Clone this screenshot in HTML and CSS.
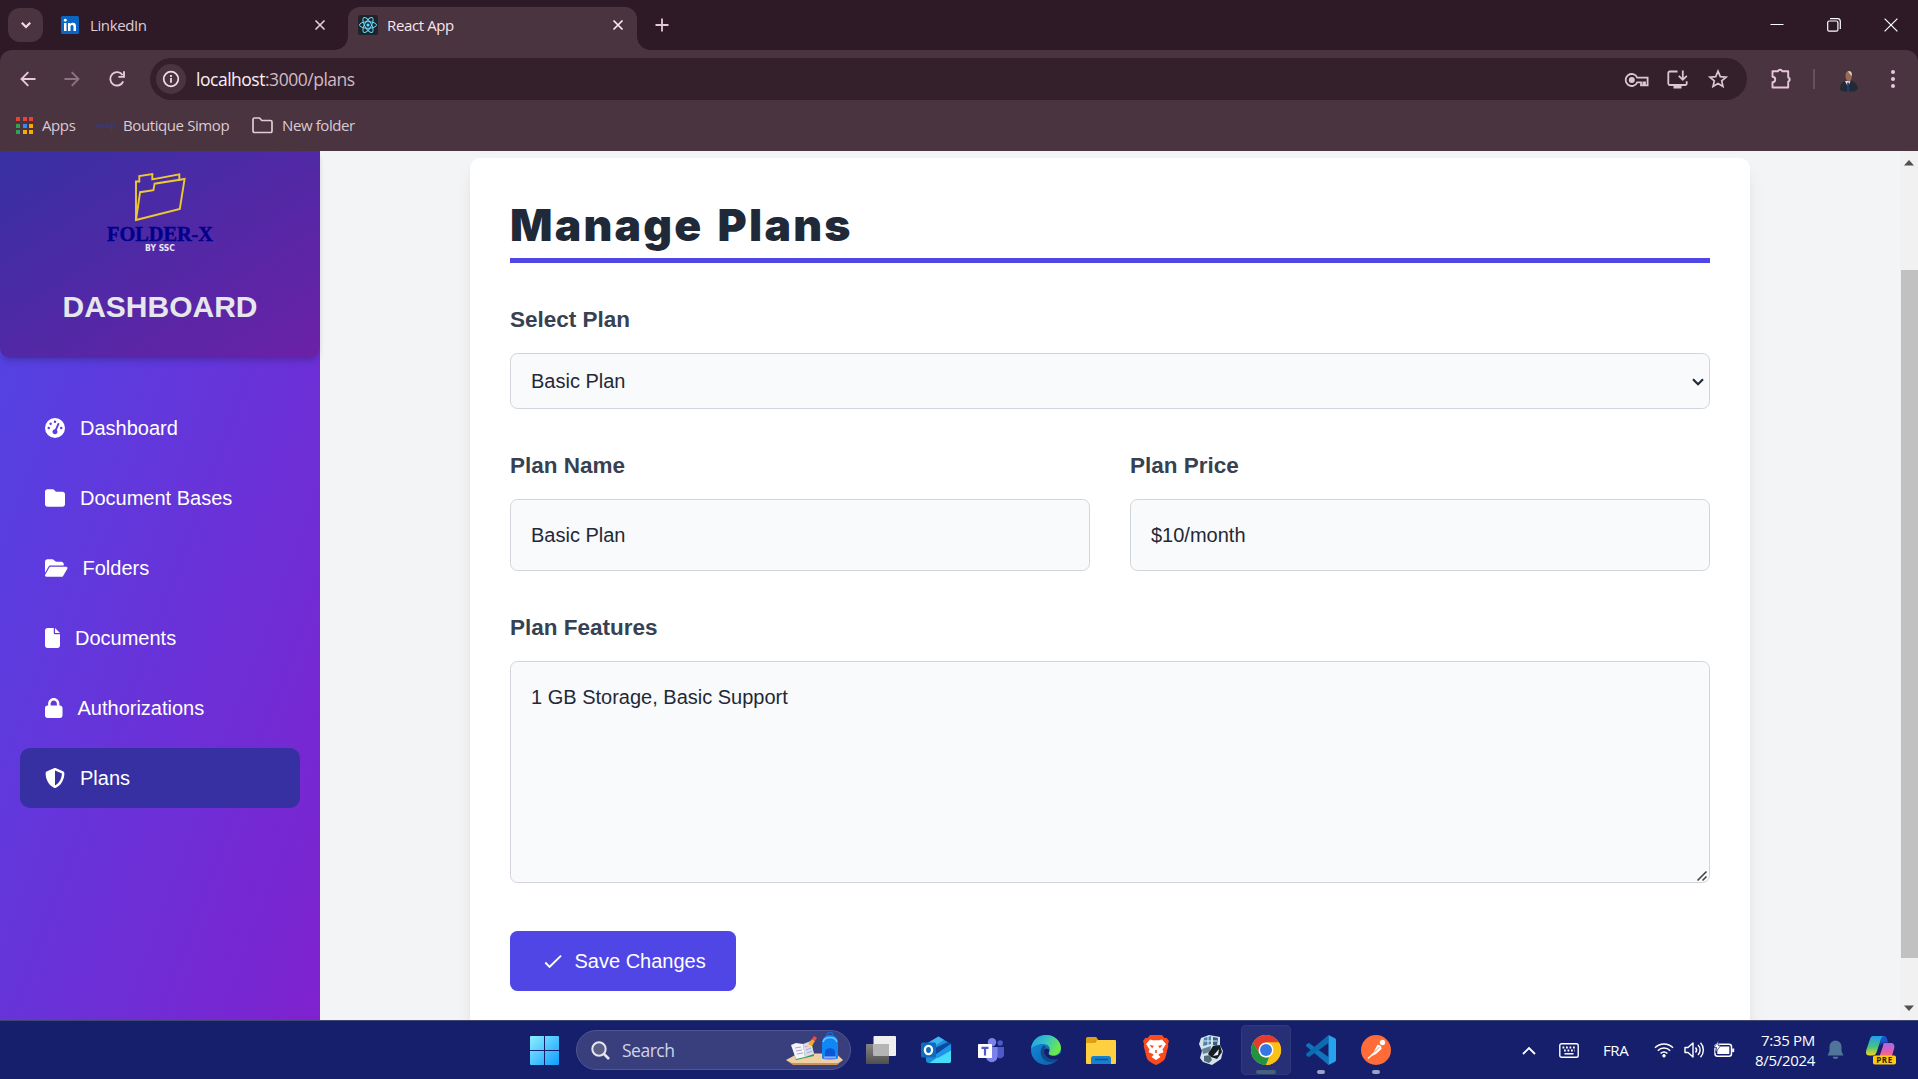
FILE: index.html
```html
<!DOCTYPE html>
<html lang="en">
<head>
<meta charset="utf-8">
<title>React App</title>
<link rel="stylesheet" href="styles.css">
</head>
<body>
<div class="screen">
  <div class="tabstrip">
    <div class="tab-search"><svg width="14" height="14" viewBox="0 0 14 14"><path d="M2.8 4.8 7 9l4.2-4.2" fill="none" stroke="#f3dce8" stroke-width="2.2"/></svg></div>
    <div class="tab tab-idle">
      <svg class="tab-icon" width="18" height="18" viewBox="0 0 18 18"><rect width="18" height="18" rx="1.5" fill="#0a66c2"/><path d="M3 7h2.5v8H3zM7 7h2.4v1.1C10 7.200 10.800 6.800 12 6.800c2.400 0 3 1.600 3 3.800V15h-2.500v-3.900c0-1-.2-2-1.400-2s-1.600.9-1.600 2V15H7z" fill="#fff"/><circle cx="4.250" cy="4.300" r="1.450" fill="#fff"/></svg>
      <span class="tab-title">LinkedIn</span>
      <svg class="tab-close" width="12" height="12" viewBox="0 0 12 12"><path d="m1.500 1.500 9 9m0-9-9 9" stroke="#e3c9d8" stroke-width="1.700"/></svg>
    </div>
    <div class="tab tab-active">
      <svg class="tab-icon" width="20" height="20" viewBox="0 0 20 20"><rect width="20" height="20" rx="2" fill="#20232a"/><g fill="none" stroke="#61dafb" stroke-width="1"><ellipse cx="10" cy="10" rx="8.500" ry="3.300"/><ellipse cx="10" cy="10" rx="8.500" ry="3.300" transform="rotate(60 10 10)"/><ellipse cx="10" cy="10" rx="8.500" ry="3.300" transform="rotate(120 10 10)"/></g><circle cx="10" cy="10" r="1.600" fill="#61dafb"/></svg>
      <span class="tab-title">React App</span>
      <svg class="tab-close" width="12" height="12" viewBox="0 0 12 12"><path d="m1.500 1.500 9 9m0-9-9 9" stroke="#fbeaf3" stroke-width="1.700"/></svg>
    </div>
    <svg class="tab-new" width="14" height="14" viewBox="0 0 14 14"><path d="M7 .5v13M.5 7h13" stroke="#e3c9d8" stroke-width="1.800"/></svg>
    <div class="win-controls">
      <svg width="14" height="14" viewBox="0 0 14 14"><path d="M.5 6.500h13" stroke="#fff"/></svg>
      <svg width="14" height="14" viewBox="0 0 14 14" fill="none" stroke="#fff" stroke-width="1.200"><rect x=".7" y="3" width="10.200" height="10.200" rx="1.500"/><path d="M3 .7h7.500a2.800 2.800 0 0 1 2.800 2.800V11"/></svg>
      <svg width="14" height="14" viewBox="0 0 14 14"><path d="m.6.6 12.800 12.800m0-12.800L.6 13.400" stroke="#fff" stroke-width="1.200"/></svg>
    </div>
  </div>

  <div class="toolbar">
    <svg class="tb-back" width="16" height="16" viewBox="0 0 16 16" fill="none" stroke="#e6c9da" stroke-width="1.900"><path d="M15.500 8H1.800M8.300 1.200 1.500 8l6.800 6.800"/></svg>
    <svg class="tb-forward" width="16" height="16" viewBox="0 0 16 16" fill="none" stroke="#8e7483" stroke-width="1.900"><path d="M.5 8h13.700M7.700 1.200 14.500 8l-6.800 6.800"/></svg>
    <svg class="tb-reload" width="18" height="18" viewBox="0 0 18 18" fill="none" stroke="#e6c9da" stroke-width="1.900"><path d="M15.200 11.300A6.700 6.700 0 1 1 14.600 5.200"/><path d="M16 1.300v5.600h-5.600"/></svg>
    <div class="omnibox">
      <div class="site-info"><svg width="18" height="18" viewBox="0 0 18 18"><circle cx="9" cy="9" r="7.300" fill="none" stroke="#f1dbe6" stroke-width="1.700"/><path d="M9 8v4.800M9 5v1.900" stroke="#f1dbe6" stroke-width="1.800"/></svg></div>
      <span class="url"><b>localhost</b>:3000/plans</span>
      <svg class="om-key" width="24" height="14" viewBox="0 0 24 14" fill="none" stroke="#d9c6cf" stroke-width="1.800"><path d="M12.200 4.700A6 6 0 1 0 12.200 9.300H16v3h2.300v-3H20v3h2.600V4.700z"/><circle cx="6.800" cy="7" r="2.100" fill="#d9c6cf"/></svg>
      <svg class="om-install" width="21" height="19" viewBox="0 0 21 19" fill="none" stroke="#d9c6cf" stroke-width="1.800"><path d="M10.500 1.500H2.800a1.500 1.500 0 0 0-1.500 1.500v10.500A1.500 1.500 0 0 0 2.800 15h15.400a1.500 1.500 0 0 0 1.500-1.500v-2.300"/><path d="M15.800.5v9M11.800 5.800l4 4 4-4"/><path d="M6.500 17.200h8" stroke-width="2.600"/></svg>
      <svg class="om-star" width="20" height="20" viewBox="0 0 20 20" fill="none" stroke="#d9c6cf" stroke-width="1.700"><path d="m10 2.200 2.300 5.400 5.800.5-4.400 3.800 1.300 5.700-5-3-5 3 1.300-5.700L1.900 8.100l5.800-.5z"/></svg>
    </div>
    <svg class="tb-ext" width="22" height="22" viewBox="0 0 22 22"><path d="M2.500 3.200H8a2.200 2.200 0 0 1 4.200 0h6v6.200a2.200 2.200 0 0 1 0 4.200v5.900H2.500v-5.400a2.700 2.700 0 0 0 0-5.400z" fill="none" stroke="#e8c6dc" stroke-width="1.900" stroke-linejoin="round"/><path d="M8.300 2.800a2 2 0 0 1 3.600 0zM18.700 9.700a2 2 0 0 1 0 3.700z" fill="#e8c6dc"/></svg>
    <div class="tb-sep"></div>
    <svg class="tb-avatar" width="20" height="22" viewBox="0 0 20 22"><path d="M1 20c0-6 2.500-9.500 8-9.500s9.500 3 10 8l-3 3H4z" fill="#222a35"/><path d="m6 11 3 6 2.500-6z" fill="#dfe6f2"/><path d="M8.200 12.500h1.600l.8 9H8z" fill="#22386f"/><path d="M6.500 5.500c0-3 1.300-4.500 3.200-4.500s3.200 1.500 3.200 4.500-1.400 6-3.200 6-3.200-3-3.200-6z" fill="#9c6a53"/><path d="M9 1.500c3-1 4 1 3.800 4.500L11 4z" fill="#ded9d5"/></svg>
    <svg class="tb-menu" width="4" height="20" viewBox="0 0 4 20" fill="#e8c6dc"><circle cx="2" cy="3" r="2"/><circle cx="2" cy="10" r="2"/><circle cx="2" cy="17" r="2"/></svg>
  </div>

  <div class="bookmarks">
    <div class="bm-apps"><i class="r"></i><i class="r"></i><i class="r"></i><i class="g"></i><i class="b"></i><i class="y"></i><i class="g"></i><i class="y"></i><i class="y"></i></div>
    <span class="bm-label bm-l1">Apps</span>
    <span class="bm-simop">simop</span>
    <span class="bm-label bm-l2">Boutique Simop</span>
    <svg class="bm-folder" width="21" height="17" viewBox="0 0 21 17"><path d="M1 2.500A1.500 1.500 0 0 1 2.500 1H7.500l2.300 2.500h8.700A1.500 1.500 0 0 1 20 5v9a1.500 1.500 0 0 1-1.500 1.500h-16A1.500 1.500 0 0 1 1 14z" fill="none" stroke="#e0ccd6" stroke-width="1.700"/></svg>
    <span class="bm-label bm-l3">New folder</span>
  </div>

  <div class="page">
    <aside class="sidebar">
      <div class="brand">
        <svg class="brand-logo" width="120" height="100" viewBox="0 0 120 100">
          <g fill="none" stroke="#ecc92e" stroke-width="1.900"><path d="M36 70V31.500h3.300V26l13-2v5.400l27-5v6.300"/><path d="m36 70 43.800-11 4.800-30-30 4.700-1.200 6.500-13.300 2z"/></g>
          <text x="60" y="91" class="logo-name" textLength="106" lengthAdjust="spacingAndGlyphs">FOLDER-X</text>
          <text x="60" y="101" class="logo-by" textLength="30" lengthAdjust="spacingAndGlyphs">BY SSC</text>
        </svg>
        <h2 class="brand-title">DASHBOARD</h2>
      </div>
      <nav class="nav">
        <a class="nav-item"><svg width="20" height="20" viewBox="0 0 512 512"><path fill="#fff" d="M0 256a256 256 0 1 1 512 0A256 256 0 1 1 0 256zM288 96a32 32 0 1 0-64 0 32 32 0 1 0 64 0zM256 416c35.300 0 64-28.700 64-64 0-17.400-6.900-33.100-18.100-44.600L366 161.700c5.300-12.100-.2-26.300-12.300-31.600s-26.300.2-31.600 12.300L257.900 288c-.6 0-1.300 0-1.900 0-35.300 0-64 28.700-64 64s28.700 64 64 64zM176 144a32 32 0 1 0-64 0 32 32 0 1 0 64 0zM96 288a32 32 0 1 0 0-64 32 32 0 1 0 0 64zm352-32a32 32 0 1 0-64 0 32 32 0 1 0 64 0z"/></svg>Dashboard</a>
        <a class="nav-item"><svg width="20" height="20" viewBox="0 0 512 512"><path fill="#fff" d="M64 480H448c35.300 0 64-28.700 64-64V160c0-35.300-28.700-64-64-64H288c-10.100 0-19.600-4.700-25.600-12.800L243.200 57.600C231.100 41.500 212.100 32 192 32H64C28.700 32 0 60.700 0 96V416c0 35.300 28.700 64 64 64z"/></svg>Document Bases</a>
        <a class="nav-item"><svg width="22.500" height="20" viewBox="0 0 576 512"><path fill="#fff" d="M88.700 223.800L0 375.800V96C0 60.700 28.700 32 64 32H181.500c17 0 33.300 6.700 45.300 18.700l26.500 26.500c12 12 28.300 18.700 45.300 18.700H416c35.300 0 64 28.700 64 64v32H144c-22.800 0-43.800 12.100-55.300 31.800zm27.600 16.100C122.100 230 132.600 224 144 224H544c11.500 0 22 6.100 27.700 16.100s5.700 22.200-.1 32.100l-112 192C453.900 474 443.400 480 432 480H32c-11.500 0-22-6.100-27.700-16.100s-5.700-22.200.1-32.100l112-192z"/></svg>Folders</a>
        <a class="nav-item"><svg width="15" height="20" viewBox="0 0 384 512"><path fill="#fff" d="M0 64C0 28.700 28.700 0 64 0H224V128c0 17.700 14.300 32 32 32H384V448c0 35.300-28.700 64-64 64H64c-35.300 0-64-28.700-64-64V64zm384 64H256V0L384 128z"/></svg>Documents</a>
        <a class="nav-item"><svg width="17.500" height="20" viewBox="0 0 448 512"><path fill="#fff" d="M144 144v48H304V144c0-44.200-35.800-80-80-80s-80 35.800-80 80zM80 192V144C80 64.500 144.500 0 224 0s144 64.500 144 144v48h16c35.300 0 64 28.700 64 64V448c0 35.300-28.700 64-64 64H64c-35.300 0-64-28.700-64-64V256c0-35.300 28.700-64 64-64H80z"/></svg>Authorizations</a>
        <a class="nav-item nav-current"><svg width="20" height="20" viewBox="0 0 512 512"><path fill="#fff" d="M256 0c4.600 0 9.200 1 13.400 2.900L457.700 82.800c22 9.300 38.400 31 38.300 57.200c-.5 99.200-41.300 280.700-213.600 363.200c-16.700 8-36.100 8-52.800 0C57.300 420.700 16.500 239.200 16 140c-.1-26.200 16.300-47.900 38.300-57.200L242.700 2.900C246.800 1 251.400 0 256 0zm0 66.800V444.800C394 378 431.100 230.100 432 141.400L256 66.800z"/></svg>Plans</a>
      </nav>
    </aside>

    <main class="content">
      <form class="card">
        <h1 class="card-title">Manage Plans</h1>
        <div class="field field-select">
          <label class="label">Select Plan</label>
          <div class="select-wrap">
            <select class="control select"><option>Basic Plan</option></select>
            <svg class="select-arrow" width="12" height="8" viewBox="0 0 12 8"><path d="m1 1.300 5 5 5-5" fill="none" stroke="#1f2937" stroke-width="2.200"/></svg>
          </div>
        </div>
        <div class="field-row">
          <div class="field"><label class="label">Plan Name</label><input class="control input" value="Basic Plan"></div>
          <div class="field"><label class="label">Plan Price</label><input class="control input" value="$10/month"></div>
        </div>
        <div class="field">
          <label class="label">Plan Features</label>
          <div class="area-wrap">
            <textarea class="control area">1 GB Storage, Basic Support</textarea>
            <svg class="area-grip" width="12" height="12" viewBox="0 0 12 12"><path d="m1.500 10.500 9-9M6.500 10.500l4-4" stroke="#444" stroke-width="1.600"/></svg>
          </div>
        </div>
        <button class="save" type="button"><svg width="20" height="20" viewBox="0 0 20 20"><path d="m2.300 11.500 4.300 4.300L18.100 4.600" fill="none" stroke="#fff" stroke-width="1.900"/></svg>Save Changes</button>
      </form>
    </main>

    <div class="scrollbar">
      <svg width="10" height="6" viewBox="0 0 10 6"><path d="M0 5.500h10L5 0z" fill="#505050"/></svg>
      <div class="thumb"></div>
      <svg width="10" height="6" viewBox="0 0 10 6"><path d="M0 .5h10L5 6z" fill="#505050"/></svg>
    </div>
  </div>

  <div class="taskbar">
    <svg class="start" width="29" height="29" viewBox="0 0 29 29"><defs><linearGradient id="win" gradientUnits="userSpaceOnUse" x1="0" y1="0" x2="29" y2="29"><stop offset="0" stop-color="#8bf0ff"/><stop offset="1" stop-color="#109bfb"/></linearGradient></defs><path d="M1 0h13v14H0V1a1 1 0 0 1 1-1zM15 0h13a1 1 0 0 1 1 1v13H15zM0 15h14v14H1a1 1 0 0 1-1-1zM15 15h14v13a1 1 0 0 1-1 1H15z" fill="url(#win)"/></svg>
    <div class="search">
      <svg width="19" height="19" viewBox="0 0 19 19" fill="none" stroke="#e6e6ef" stroke-width="2"><circle cx="8" cy="8" r="6.700" fill="#5b5f88"/><path d="m13 13 5 5" stroke-width="2.600"/></svg>
      <span class="search-text">Search</span>
      <svg class="search-art" width="58" height="32" viewBox="0 0 58 32"><path d="M0 26h57l-6 5H7z" fill="#c8935d"/><path d="m0 26 12-6.500h38l7 6.500-5 3H6z" fill="#f1cfa4"/><path d="m7 16 19-7 2 13-18 4z" fill="#2f9b52"/><path d="m5 11 5-2 7 1 2 13-9 2z" fill="#f6f4fb"/><path d="m17 10 8-3 3 13-9 3z" fill="#dcdaf0"/><path d="m9 14 6-1M10 17l6-1M11 20l6-1M19 13l5-2M20 16l5-2M21 19l5-2" stroke="#aaa5ca"/><path d="m20 15 2-5 4 2z" fill="#f3d6a5"/><path d="m22 10 4-5 3 2-3 5z" fill="#f9a825"/><path d="m26 5 2-3 3 2-2 3z" fill="#ef4c4c"/><path d="M41 1.500a3 3 0 0 1 6 0" fill="none" stroke="#1565d8" stroke-width="1.500"/><path d="M36 24V10c0-6 3-9 8-9s8 3 8 9v14c0 2-16 2-16 0z" fill="#1187f5"/><path d="M37 8c2-6 12-6 14 0" fill="none" stroke="#6cc7ff" stroke-width="1.500"/><path d="M39 22v-4c0-5 10-5 10 0v4z" fill="#0c58d4"/><path d="M38 23.500h12" stroke="#cd8df5" stroke-width="1.800"/></svg>
    </div>
    <div class="apps">
      <div class="app"><svg width="30" height="30" viewBox="0 0 30 30"><defs><linearGradient id="tvb" x1="0" y1="0" x2="0" y2="1"><stop offset="0" stop-color="#858585"/><stop offset="1" stop-color="#4f4f4f"/></linearGradient></defs><rect x="0" y="9" width="23" height="20" rx="1" fill="url(#tvb)"/><rect x="7.500" y="1" width="22.500" height="20" rx="1" fill="#efefef"/><path d="M7.500 9H23v12H8.500a1 1 0 0 1-1-1z" fill="#b5b5b5"/></svg></div>
      <div class="app"><svg width="30" height="30" viewBox="0 0 30 30"><path d="M5 9 17.500 1.500 30 9v17a2 2 0 0 1-2 2H8a3 3 0 0 1-3-3z" fill="#1b8fdd"/><path d="M5 9 17.500 1.500 23 5 9 14H5z" fill="#3fb4ef"/><path d="M27 7 30 9 14 20v-7z" fill="#0c4aa0"/><path d="M30 15v11a2 2 0 0 1-2 2H8.500L17 22z" fill="#47dcfb"/><path d="M14 20 30 9v6.500L17 23z" fill="#2094e8"/><rect x="0" y="7.500" width="15" height="15" rx="1.500" fill="#0f6cbd"/><ellipse cx="7.500" cy="15" rx="3.600" ry="4.200" fill="none" stroke="#fff" stroke-width="2.300"/></svg></div>
      <div class="app"><svg width="30" height="30" viewBox="0 0 30 30"><circle cx="16" cy="7.200" r="4.200" fill="#7b83eb"/><circle cx="24.200" cy="8" r="2.700" fill="#5059c9"/><path d="M21 12h7v7a4 4 0 0 1-7 3z" fill="#5059c9"/><path d="M10 12h11.500v9.500a5.700 5.700 0 0 1-11.500 0z" fill="#7b83eb"/><rect x="2" y="9" width="14" height="14" rx=".8" fill="#fff"/><path d="M5.500 12.800h7M9 12.800v7.700" stroke="#5059c9" stroke-width="2.200"/></svg></div>
      <div class="app"><svg width="30" height="30" viewBox="0 0 30 30"><defs><linearGradient id="eg" x1="0" y1="0" x2="1" y2=".4"><stop offset="0" stop-color="#1b9de2"/><stop offset=".5" stop-color="#35c1c9"/><stop offset="1" stop-color="#6be84c"/></linearGradient><linearGradient id="eb" x1="0" y1="0" x2="1" y2="1"><stop offset="0" stop-color="#1490df"/><stop offset="1" stop-color="#0c59a4"/></linearGradient></defs><circle cx="15" cy="15" r="15" fill="url(#eb)"/><path d="M0 14C1 5 7 0 15 0c9 0 15 6.500 15 13 0 5-4 7.500-7.500 7.500-4 0-5.500-1.500-4.500-3 2-3 .5-8-5-8.500C7 8.500 2 11 0 14z" fill="url(#eg)"/><path d="M13 10c-5 4-5 13 3 16.500 4 1.700 8.500.8 12-3.500-7 3.500-15 0-15-6.500 0-2 1-3.500 2-4z" fill="#114a8b"/><path d="M17.500 14c2 3-2 5 2 6.500 4 1.300 7 .3 9.500-2l1 1.500-2 3.500c-7 3-15-1-15-7 0-2.500 2-4 4.500-2.500z" fill="#151f6c"/></svg></div>
      <div class="app"><svg width="30" height="30" viewBox="0 0 30 30"><path d="M0 3.500A1.500 1.500 0 0 1 1.500 2h8.700L13 6h-3l-2 3H0z" fill="#dfa011"/><path d="M0 8h8.500l2.800-3H29a1 1 0 0 1 1 1v22a1 1 0 0 1-1 1H1a1 1 0 0 1-1-1z" fill="#ffcf42"/><path d="M5 29v-5.500a2.500 2.500 0 0 1 2.500-2.500h15a2.500 2.500 0 0 1 2.500 2.500V29z" fill="#1681d1"/><path d="M9 24.500h13" stroke="#0b5598" stroke-width="1.600"/></svg></div>
      <div class="app"><svg width="30" height="30" viewBox="0 0 30 30"><path d="M9 0h12l2.500 3 2-.3L28 6l-1 3 .3 2-3 12c-1 3-6 5.500-9.300 7-3.300-1.500-8.300-4-9.300-7L2.700 11 3 9 2 6l2.500-3.300 2 .3z" fill="#fb4a1d"/><path d="m9 4.500 3 .8h6l3-.8 4 4.500-3.500 5.500 1 2.700-4.500 1.800-.5 1 2 2-4.500 3-4.500-3 2-2-.5-1-4.500-1.800 1-2.700L5 9z" fill="#fff"/><path d="m8.500 10 4.300.8-1.600 2.400zM21.500 10l-4.300.8 1.600 2.400zM14.200 15h1.600v3h-1.600z" fill="#fb4a1d"/></svg></div>
      <div class="app"><svg width="30" height="30" viewBox="0 0 30 30"><path d="m5 3 8-3 11 2 0 8 3 6-2 8-9 6-9-3-3-4 2-7-3-7z" fill="#d3e3e9"/><path d="m8 3 7-2v8L7 11z" fill="#4c82ab"/><path d="m17 2 5 1-1 8-4-1z" fill="#356086"/><path d="m6 14 9-3-1 6-7 2z" fill="#668394"/><path d="m12 19 5-8 7-1 2 7-5 7-6-2z" fill="#141c25"/><path d="m8 21 6-1 2 5-3 3-5-2z" fill="#536977"/><path d="M8 6h13M12 1v9" stroke="#e1f0f6"/><path d="m17 21 6-7-1 6z" fill="#e7f0f3"/></svg></div>
      <div class="app app-current"><svg width="30" height="30" viewBox="0 0 30 30"><circle cx="15" cy="15" r="15" fill="#fbc116"/><path d="M2 7.500A15 15 0 0 1 28 7.500H15L8.500 18.750z" fill="#e33b2e"/><path d="M2 7.500 8.500 18.750c2 3.500 6 4.500 9.500 3.400L14.900 30A15 15 0 0 1 2 7.500z" fill="#229342"/><path d="M28 7.500H15a7.500 7.500 0 0 1 6.500 11.250L14.900 30A15 15 0 0 0 28 7.500z" fill="#fbc116"/><circle cx="15" cy="15" r="7.500" fill="#fff"/><circle cx="15" cy="15" r="6" fill="#3578e5"/></svg><b class="run run-wide"></b></div>
      <div class="app"><svg width="30" height="30" viewBox="0 0 30 30"><path d="M.5 11.500a1.300 1.300 0 0 1 0-1.900l1.300-1.200a1.300 1.300 0 0 1 1.600-.1L22.500 22v8z" fill="#1173bd"/><path d="M22.500 0v8L3.400 21.700a1.300 1.300 0 0 1-1.600-.1L.5 20.400a1.300 1.300 0 0 1 0-1.900z" fill="#0d6cb1"/><path d="M22.500 0v30l6.500-3.300a2 2 0 0 0 1-1.700V5a2 2 0 0 0-1-1.700z" fill="#27a3ee"/></svg><b class="run"></b></div>
      <div class="app"><svg width="30" height="30" viewBox="0 0 30 30"><circle cx="15" cy="15" r="15" fill="#ff6c37"/><circle cx="21.500" cy="7.500" r="2.700" fill="#fff"/><path d="m16.500 9.500 3.500 1.500.5 3-5.500 5-5 2.500 3-5z" fill="#fff"/><path d="m7 23.500 7-6.500" stroke="#fff" stroke-width="1.500"/><path d="m13 17.500 5.500-5.500" stroke="#ff6c37" stroke-width=".8"/></svg><b class="run"></b></div>
    </div>
    <div class="tray">
      <svg class="t-up" width="14" height="9" viewBox="0 0 14 9"><path d="m1 8 6-6 6 6" fill="none" stroke="#fff" stroke-width="1.900"/></svg>
      <svg class="t-kb" width="20" height="15" viewBox="0 0 20 15"><rect x=".8" y=".8" width="18.400" height="13.400" rx="1.800" fill="none" stroke="#fff" stroke-width="1.400"/><path d="M3.500 4.500h13M5 7.500h11" stroke="#fff" stroke-width="1.800" stroke-dasharray="1.800 1.700"/><path d="M5.500 10.800h9" stroke="#fff" stroke-width="1.500"/></svg>
      <span class="t-lang">FRA</span>
      <svg class="t-wifi" width="20" height="16" viewBox="0 0 20 16" fill="none" stroke="#fff" stroke-width="1.500"><path d="M1 5.800a12.500 12.500 0 0 1 18 0M3.800 8.700a8.700 8.700 0 0 1 12.400 0M6.600 11.500a4.800 4.800 0 0 1 6.800 0"/><circle cx="10" cy="13.800" r="1.300" fill="#fff" stroke-width="1"/></svg>
      <svg class="t-vol" width="20" height="18" viewBox="0 0 20 18" fill="none" stroke="#fff" stroke-width="1.400"><path d="M1 6.500h3L9 2v14l-5-4.500H1z" stroke-linejoin="round"/><path d="M11.500 6.500a3.700 3.700 0 0 1 0 5M14 4a7 7 0 0 1 0 10M16.500 1.800a10.500 10.500 0 0 1 0 14.400"/></svg>
      <svg class="t-bat" width="21" height="18" viewBox="0 0 21 18"><rect x="1" y="3.200" width="16.500" height="12" rx="2.500" fill="none" stroke="#fff" stroke-width="1.500"/><path d="M19.200 7.500v3.600" stroke="#fff" stroke-width="2"/><rect x="3.300" y="5.500" width="12" height="7.500" fill="#fff"/><path d="M4.500-.5 0 6.500h2.500L1.500 11.500 6.800 4.300H4z" fill="#fff" stroke="#151f6c" stroke-width=".7"/></svg>
      <div class="t-clock"><span>7:35 PM</span><span>8/5/2024</span></div>
      <svg class="t-bell" width="17" height="20" viewBox="0 0 17 20" fill="#50749a"><path d="M8.500.5a6 6 0 0 0-6 6V11L.6 15.500h15.800L14.500 11V6.500a6 6 0 0 0-6-6zM5.500 16.800a3.100 3.100 0 0 0 6 0z"/></svg>
      <svg class="t-copilot" width="30" height="29" viewBox="0 0 30 29"><defs><linearGradient id="ca" x1="0" y1="0" x2="0" y2="1"><stop offset="0" stop-color="#259df0"/><stop offset=".55" stop-color="#46c37e"/><stop offset="1" stop-color="#f2d61d"/></linearGradient><linearGradient id="cb" x1="0" y1="0" x2="0" y2="1"><stop offset="0" stop-color="#a468ee"/><stop offset=".6" stop-color="#ee5d9f"/><stop offset="1" stop-color="#f98b52"/></linearGradient></defs><path d="M15 0h3c2 0 3 1.500 4 6.500h-4c-2 0-3 1-4 4z" fill="#1a55d0"/><path d="M7 0h11c-2 0-3 2-4 6l-3 9c-1 3-2 4.500-5 4.500H3c-3 0-3.500-3-2.500-6L4 3c.7-2 1.500-3 3-3z" fill="url(#ca)"/><path d="M18 7h7c3 0 4 2.500 3 6l-3 10H10c2 0 3-1 4-4l3-9c.5-2 0-3 1-3z" fill="url(#cb)"/><rect x="7" y="19.500" width="23" height="9" rx="1.800" fill="#ffc90e"/><text x="18.500" y="27" class="pre" text-anchor="middle">PRE</text></svg>
    </div>
  </div>
</div>
</body>
</html>
```
FILE: styles.css
```css
* { box-sizing: border-box; }
html, body { margin: 0; padding: 0; }
body { width: 1918px; height: 1079px; overflow: hidden; font-family: "Liberation Sans", Arial, sans-serif; }
svg { display: block; flex: none; overflow: visible; }
.screen { display: flex; flex-direction: column; width: 1918px; height: 1079px; background: #2d1a26; }

/* browser frame */
.tabstrip, .toolbar, .bookmarks, .taskbar { font-family: "Open Sans", "Noto Sans", sans-serif; }
.tabstrip { display: flex; align-items: center; height: 50px; padding-left: 8px; background: #2d1a26; }
.tab-search { display: flex; align-items: center; justify-content: center; width: 35px; height: 34px; border-radius: 12px; background: #4a3440; }
.tab { display: flex; align-items: center; color: #dfcbd5; font-size: 15px; }
.tab-idle { width: 287px; margin-left: 18px; }
.tab-idle .tab-title { margin-left: 11px; }
.tab-close { margin-left: auto; }
.tab-idle .tab-close { margin-right: 22px; }
.tab-active { position: relative; align-self: flex-end; width: 289px; height: 43px; padding: 0 13px 7px 10px; border-radius: 12px 12px 0 0; background: #4a3440; color: #f7e6ef; }
.tab-active::before, .tab-active::after { content: ""; position: absolute; bottom: 0; width: 13px; height: 13px; }
.tab-active::before { left: -13px; background: radial-gradient(circle at 0 0, transparent 12.500px, #4a3440 13px); }
.tab-active::after { right: -13px; background: radial-gradient(circle at 100% 0, transparent 12.500px, #4a3440 13px); }
.tab-active .tab-title { margin-left: 9px; }
.tab-title { letter-spacing: -0.380px; line-height: 20px; }
.tab-new { margin-left: 18px; }
.win-controls { display: flex; gap: 43px; margin: 0 20px 1px auto; }

.toolbar { display: flex; align-items: center; height: 58px; padding-left: 20px; border-radius: 12px 12px 0 0; background: #4a3440; }
.tb-forward { margin-left: 28px; }
.tb-reload { margin-left: 28px; }
.omnibox { display: flex; align-items: center; width: 1597px; height: 42px; margin-left: 24px; padding: 0 19px 0 6px; border-radius: 21px; background: #34202b; }
.site-info { display: flex; align-items: center; justify-content: center; width: 30px; height: 30px; border-radius: 50%; background: #4a3440; }
.url { margin: 0 auto 0 10px; color: #d0bac5; font-size: 17.500px; letter-spacing: -0.480px; }
.url b { color: #fbeff5; font-weight: 400; }
.om-key { margin-top: 2px; }
.om-install { margin-left: 18px; }
.om-star { margin-left: 20px; }
.tb-ext { margin-left: 23px; }
.tb-sep { width: 2px; height: 20px; margin-left: 21px; background: #67505e; }
.tb-avatar { margin: 3px 0 0 24px; }
.tb-menu { margin-left: 32px; }

.bookmarks { display: flex; align-items: center; height: 43px; padding: 0 0 8px 16px; background: #4a3440; color: #dccad3; font-size: 15px; }
.bm-apps { display: grid; grid-template-columns: repeat(3, 4px); gap: 2.500px; width: 17px; }
.bm-apps i { height: 4px; }
.bm-apps .r { background: #ea4335; }
.bm-apps .g { background: #34a053; }
.bm-apps .b { background: #2f8bf5; }
.bm-apps .y { background: #f9ab00; }
.bm-label { margin-top: -1px; letter-spacing: -0.400px; white-space: nowrap; }
.bm-l1 { width: 54px; margin-left: 9px; }
.bm-simop { width: 17px; color: #39397f; font: 700 8px/16px "Liberation Sans", sans-serif; letter-spacing: -1px; }
.bm-l2 { width: 128px; margin-left: 10px; }
.bm-folder { margin-left: 1px; }
.bm-l3 { margin-left: 9px; }

/* page */
.page { display: flex; height: 869px; background: #f3f4f6; }
.sidebar { width: 320px; background: linear-gradient(to bottom right, #4f46e5, #7e22ce); }
.brand { display: flex; flex-direction: column; align-items: center; height: 207px; border-radius: 0 0 10px 10px; background: linear-gradient(to bottom right, #3730a3, #6b21a8); box-shadow: 0 5px 7px -1px rgba(0, 0, 0, .12), 0 2px 5px -2px rgba(0, 0, 0, .1); }
.brand-logo { margin-top: -1px; }
.logo-name { fill: #00008b; stroke: #00008b; stroke-width: .4px; font: 700 20px "Liberation Serif", serif; text-anchor: middle; }
.logo-by { fill: #e9e3f5; font: 700 8px "DejaVu Sans", sans-serif; text-anchor: middle; }
.brand-title { margin: 34px 0 0; color: #e5e7eb; font-size: 30px; line-height: 45px; }
.nav { display: flex; flex-direction: column; gap: 10px; padding: 40px 20px 0; }
.nav-item { display: flex; align-items: center; gap: 15px; height: 60px; padding-left: 25px; border-radius: 10px; color: #fff; font-size: 20px; }
.nav-current { background: #3730a3; }

.content { display: flex; justify-content: center; width: 1580px; padding-top: 7px; overflow: hidden; }
.card { width: 1280px; height: 930px; padding: 40px 40px 0; border-radius: 10px; background: #fff; box-shadow: 0 12px 19px -4px rgba(0, 0, 0, .1), 0 5px 8px -5px rgba(0, 0, 0, .1); }
.card-title { height: 65px; margin: 0 0 40px; border-bottom: 5px solid #4f46e5; color: #1f2937; font: 900 44.500px/55px Inter, "Liberation Sans", sans-serif; letter-spacing: 2.200px; word-spacing: 3px; }
.field { display: flex; flex-direction: column; flex: 1; }
.field-row { display: flex; gap: 40px; margin: 40px 0; }
.label { margin-bottom: 16px; color: #374151; font-size: 22.500px; font-weight: 700; line-height: 34px; }
.control { display: block; width: 100%; padding: 0 19px 0 20px; border: 1px solid #d1d5db; border-radius: 7.500px; outline: 0; background: #f9fafb; color: #1f2937; font: 20px/30px "Liberation Sans", Arial, sans-serif; }
.select-wrap, .area-wrap { position: relative; }
.select { height: 56px; appearance: none; }
.select-arrow { position: absolute; right: 6px; top: 25px; }
.input { height: 72px; }
.area { height: 222px; padding-top: 20px; resize: none; }
.area-grip { position: absolute; right: 2px; bottom: 1px; }
.save { display: flex; align-items: center; gap: 12px; width: 226px; height: 60px; margin-top: 48px; padding: 0 0 0 32.500px; border: 0; border-radius: 7.500px; background: #4f46e5; color: #fff; font: 20px "Liberation Sans", Arial, sans-serif; }

.scrollbar { display: flex; flex-direction: column; align-items: center; width: 18px; padding: 9px 0; background: #f1f1f1; }
.thumb { width: 17px; height: 688px; margin: 104px 0 auto 1px; background: #c1c1c1; }

/* taskbar */
.taskbar { display: flex; align-items: center; height: 59px; padding-left: 530px; border-top: 1px solid #3e4770; background: #151f6c; color: #fff; }
.search { display: flex; align-items: center; width: 275px; height: 40px; margin-left: 17px; padding: 0 6px 0 14px; border: 1px solid #4f568f; border-radius: 20px; background: #393f7d; }
.search-text { margin: 0 auto 0 12px; color: #d2d4e6; font-size: 17.500px; letter-spacing: -0.500px; }
.apps { display: flex; margin-left: 2px; }
.app { position: relative; display: flex; align-items: center; justify-content: center; width: 50px; height: 50px; margin: 0 2.500px; border-radius: 5px; }
.app-current { background: #272f76; box-shadow: inset 0 0 0 1px #31397e; }
.run { position: absolute; bottom: 1px; left: 21px; width: 8px; height: 4px; border-radius: 2px; background: #9ba0c5; }
.run-wide { left: 15px; width: 20px; background: #436477; }
.tray { display: flex; align-items: center; height: 58px; margin-left: auto; padding-right: 22px; font-size: 15px; }
.t-kb { margin-left: 23px; }
.t-lang { width: 27px; margin-left: 24px; letter-spacing: -0.400px; }
.t-wifi { margin-left: 24px; }
.t-vol { margin-left: 10px; }
.t-bat { margin-left: 10px; }
.t-clock { display: flex; flex-direction: column; align-items: flex-end; width: 80px; margin-top: -1px; line-height: 20px; letter-spacing: -0.300px; }
.t-bell { margin-left: 12px; }
.t-copilot { margin-left: 22px; }
.pre { fill: #2b2205; font: 700 8px "Open Sans", sans-serif; letter-spacing: .5px; }
```
